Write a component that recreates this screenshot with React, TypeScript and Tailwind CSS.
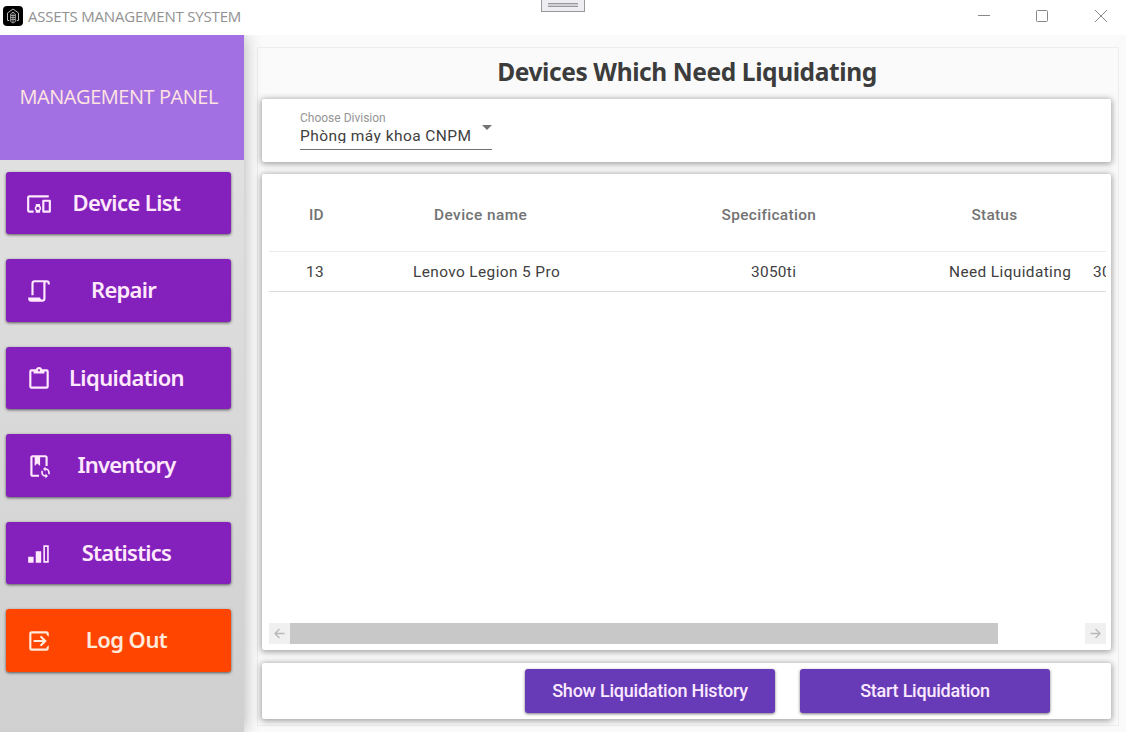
import type { ReactNode } from "react";

const icons: Record<string, ReactNode> = {
  devices: (
    <path d="M3 6h18V4H3c-1.1 0-2 .9-2 2v12c0 1.1.9 2 2 2h4v-2H3V6zm10 6H9v1.78c-.61.55-1 1.33-1 2.22s.39 1.67 1 2.22V20h4v-1.78c.61-.55 1-1.34 1-2.22s-.39-1.67-1-2.22V12zm-2 5.5c-.83 0-1.5-.67-1.5-1.5s.67-1.5 1.5-1.5 1.5.67 1.5 1.5-.67 1.5-1.5 1.5zM22 8h-6c-.5 0-1 .5-1 1v10c0 .5.5 1 1 1h6c.5 0 1-.5 1-1V9c0-.5-.5-1-1-1zm-1 10h-4v-8h4v8z" />
  ),
  script: (
    <path d="M15,20A1,1 0 0,0 16,19V4H8A1,1 0 0,0 7,5V16H5V5A3,3 0 0,1 8,2H19A3,3 0 0,1 22,5V6H20V5A1,1 0 0,0 19,4A1,1 0 0,0 18,5V9L18,19A3,3 0 0,1 15,22H5A3,3 0 0,1 2,19V18H13A2,2 0 0,0 15,20Z" />
  ),
  clipboard: (
    <path d="M19,3H14.82C14.4,1.84 13.3,1 12,1C10.7,1 9.6,1.84 9.18,3H5A2,2 0 0,0 3,5V19A2,2 0 0,0 5,21H19A2,2 0 0,0 21,19V5A2,2 0 0,0 19,3M12,3A1,1 0 0,1 13,4A1,1 0 0,1 12,5A1,1 0 0,1 11,4A1,1 0 0,1 12,3M7,7H17V5H19V19H5V5H7V7Z" />
  ),
  book: (
    <>
      <path d="M6 2H18C19.1 2 20 2.9 20 4V12H18V4H13V12L10.5 9.75L8 12V4H6V20H12V22H6C4.9 22 4 21.1 4 20V4C4 2.9 4.9 2 6 2Z" />
      <path d="M18 12.5V14C20.2 14 22 15.8 22 18C22 18.8 21.8 19.5 21.4 20.1L20.3 19C20.4 18.7 20.5 18.3 20.5 18C20.5 16.6 19.4 15.5 18 15.5V17L15.75 14.75L18 12.5M18 23.5V22C15.8 22 14 20.2 14 18C14 17.2 14.2 16.5 14.6 15.9L15.7 17C15.6 17.3 15.5 17.7 15.5 18C15.5 19.4 16.6 20.5 18 20.5V19L20.25 21.25L18 23.5Z" />
    </>
  ),
  bars: (
    <path
      fillRule="evenodd"
      d="M2 14.5H7V20H2V14.5M9 9.5H14V20H9V9.5M16 4H21V20H16V4M17.5 5.5V18.5H19.5V5.5H17.5Z"
    />
  ),
  exit: (
    <path d="M5 3H19C20.1 3 21 3.9 21 5V8L19 6.3V5H5V19H19V17.7L21 16V19C21 20.1 20.1 21 19 21H5C3.9 21 3 20.1 3 19V5C3 3.9 3.9 3 5 3M14.1 7L19.2 12L14.1 17L12.7 15.6L15.4 13H7V11H15.4L12.7 8.4Z" />
  ),
};

const menu = [
  { label: "Device List", icon: "devices", style: "bg-[#8421bd] text-[#ffe9fb]", text: "pb-[1px] tracking-[-0.6px]" },
  { label: "Repair", icon: "script", style: "bg-[#8421bd] text-[#ffe9fb]", text: "pb-[3px] pr-[6px] tracking-[-0.75px]" },
  { label: "Liquidation", icon: "clipboard", style: "bg-[#8421bd] text-[#ffe9fb]", text: "pb-[1px] tracking-[-0.6px]" },
  { label: "Inventory", icon: "book", style: "bg-[#8421bd] text-[#ffe9fb]", text: "pb-[3px] tracking-[-0.8px]" },
  { label: "Statistics", icon: "bars", style: "bg-[#8421bd] text-[#ffe9fb]", text: "pb-[1px] tracking-[-0.75px]" },
  { label: "Log Out", icon: "exit", style: "bg-[#ff4500] text-[#ffeadc]", text: "pb-[3px] tracking-[-0.55px]" },
];

const card = "shrink-0 rounded-[2px] bg-white shadow-[0_1px_6px_1px_rgba(0,0,0,0.36)]";
const action =
  "flex h-[44px] w-[250px] items-center justify-center rounded-[3px] bg-[#673ab7] pb-px text-[18px] font-medium tracking-[-0.23px] text-[#fbeaff] shadow-[0_1px_3px_rgba(0,0,0,0.55)]";

function TitleBar() {
  return (
    <header className="relative flex h-[35px] shrink-0 bg-white pl-[3px]">
      <svg className="mt-[6px] size-[20px]" viewBox="0 0 20 20" fill="none" stroke="#bcbcbc">
        <rect width="20" height="20" rx="4" fill="#000" stroke="none" />
        <path d="M6.2 14.5H4.5V7L10 3L15.5 7V14.5H13.8" />
        <path d="M7.7 15.5V8L10 6L12.3 8V15.5L10 17Z" strokeWidth=".9" />
        <path d="M10 7.5V16M8 9.5H12M8 11.5H12M8 13.5H12" strokeWidth=".8" />
      </svg>
      <span className="ml-[5px] mt-[4px] font-['Open_Sans',sans-serif] text-[15px] leading-6 tracking-[-0.2px] whitespace-nowrap text-[#929292]">
        ASSETS MANAGEMENT SYSTEM
      </span>
      <div className="absolute left-[541px] top-0 flex h-[12px] w-[44px] justify-center border border-t-0 border-[#999] bg-[#eeeef2]">
        <div className="mt-[3px] h-[4px] w-[30px] border-y border-[#999] bg-[#d0d0d5]" />
      </div>
      <svg className="ml-auto h-[35px] w-[160px]" viewBox="0 0 160 35" fill="none" stroke="#888">
        <path d="M12 15.5H24" />
        <rect x="70.5" y="10.5" width="11" height="11" rx="1" />
        <path d="M129 10L141 22M141 10L129 22" />
      </svg>
    </header>
  );
}

function Sidebar() {
  return (
    <aside className="z-10 flex w-[244px] shrink-0 flex-col bg-linear-to-b from-[#e4e4e4] to-[#d0d0d0] shadow-[0_0_16px_rgba(0,0,0,0.3)]">
      <div className="flex h-[125px] shrink-0 items-center bg-[#a370e4] pb-[2px] pl-[19.5px] font-['Open_Sans',sans-serif] text-[20px] tracking-[-0.45px] whitespace-nowrap text-[#ffe4e1]">
        MANAGEMENT PANEL
      </div>
      <nav className="mt-[11.8px] flex flex-col gap-[24.8px] pl-[6px]">
        {menu.map((m) => (
          <button
            key={m.label}
            className={`flex h-[62.7px] w-[225px] items-center rounded-[3px] pl-[20px] shadow-[0_1px_3px_rgba(0,0,0,0.6)] ${m.style}`}
          >
            <svg className="mt-px size-[26px] shrink-0" viewBox="0 0 24 24" fill="currentColor">
              {icons[m.icon]}
            </svg>
            <span
              className={`w-[149px] text-center font-['Noto_Sans',sans-serif] text-[22px] font-semibold whitespace-nowrap ${m.text}`}
            >
              {m.label}
            </span>
          </button>
        ))}
      </nav>
    </aside>
  );
}

function Arrow({ left = false }: { left?: boolean }) {
  return (
    <div className="flex size-[21px] items-center justify-center bg-[#f0f0f0]">
      <svg className={left ? "size-[11px] rotate-180" : "size-[11px]"} viewBox="0 0 11 11" fill="none" stroke="#b8b8b8" strokeWidth="1.3">
        <path d="M.5 5.5H10M5.5 1L10 5.5L5.5 10" />
      </svg>
    </div>
  );
}

function DeviceTable() {
  return (
    <section className={`${card} mt-[12px] flex h-[476px] flex-col pr-[5px] pl-[7px]`}>
      <div className="flex-1 overflow-hidden">
        <div className="grid h-[78px] w-[1000px] grid-cols-[125px_287.5px_250px_337px] items-center border-b border-[#ebebeb] pt-[8px] pl-[40px] text-[15.4px] font-medium tracking-[0.45px] text-[#737373]">
          <span className="tracking-[0.1px]">ID</span>
          <span>Device name</span>
          <span className="tracking-[0.35px]">Specification</span>
          <span className="tracking-[0.25px]">Status</span>
        </div>
        <div className="grid h-[40px] w-[1000px] grid-cols-[107px_338px_198px_144px_1fr] items-center border-b border-[#dcdcdc] pt-[3px] pl-[37px] text-[15.4px] tracking-[0.4px] whitespace-nowrap text-[#404040]">
          <span>13</span>
          <span>Lenovo Legion 5 Pro</span>
          <span className="tracking-[0.3px]">3050ti</span>
          <span>Need Liquidating</span>
          <span>3000</span>
        </div>
      </div>
      <div className="mb-[6px] flex h-[21px]">
        <Arrow left />
        <div className="h-[21px] w-[708px] bg-[#c8c8c8]" />
        <div className="ml-auto">
          <Arrow />
        </div>
      </div>
    </section>
  );
}

export default function App() {
  return (
    <div className="flex h-[732px] w-[1126px] flex-col overflow-hidden bg-[#fafafa] font-[Roboto,sans-serif]">
      <TitleBar />
      <div className="flex min-h-0 flex-1 overflow-hidden">
        <Sidebar />
        <main className="mt-[12px] ml-[13px] flex h-[679px] w-[862px] flex-col border border-[#ededed] pr-[7px] pl-[4px]">
          <h1 className="flex h-[50.5px] shrink-0 items-center justify-center pb-[1px] pl-px font-['Noto_Sans',sans-serif] text-[24.5px] font-bold tracking-[-0.4px] whitespace-nowrap text-[#3c3c3c]">
            Devices Which Need Liquidating
          </h1>
          <section className={`${card} h-[63px] pl-[38px]`}>
            <div className="flex h-[51.5px] w-[192px] justify-between border-b border-[#707070]">
              <div className="whitespace-nowrap">
                <div className="mt-[11.5px] text-[12px] leading-[16px] text-[#959595]">Choose Division</div>
                <div className="h-[17px] overflow-hidden text-[15.5px] leading-[20px] tracking-[0.43px] text-[#404040]">
                  Phòng máy khoa CNPM
                </div>
              </div>
              <svg className="mt-[26.5px] h-[5px] w-[10px]" viewBox="0 0 10 5" fill="#737373">
                <path d="M0 0H10L5 5Z" />
              </svg>
            </div>
          </section>
          <DeviceTable />
          <section className={`${card} mt-[13px] flex h-[56px] gap-[25px] pt-[6px] pl-[263px]`}>
            <button className={action}>Show Liquidation History</button>
            <button className={action}>Start Liquidation</button>
          </section>
        </main>
      </div>
    </div>
  );
}
